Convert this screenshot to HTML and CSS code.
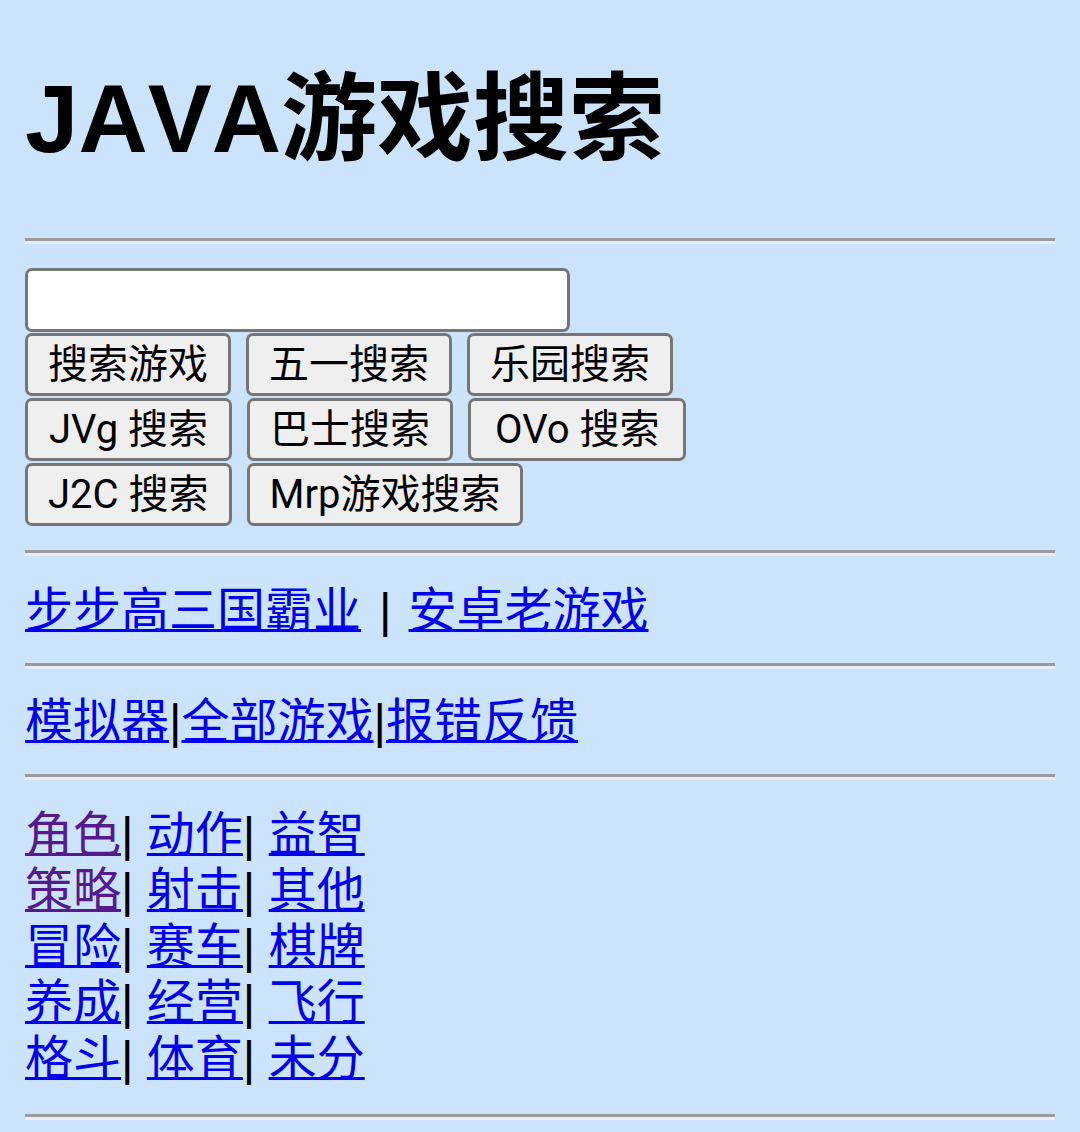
FILE: index.html
```html
<!DOCTYPE html>
<html lang="zh-CN">
<head>
<meta charset="utf-8">
<title>JAVA游戏搜索</title>
<link rel="stylesheet" href="styles.css">
</head>
<body>
<h1 class="title">JAVA游戏搜索</h1>
<hr class="rule">
<form class="search">
  <input class="search-input" type="text">
  <div class="btn-row">
    <button class="btn" type="button">搜索游戏</button>
    <button class="btn" type="button">五一搜索</button>
    <button class="btn" type="button">乐园搜索</button>
  </div>
  <div class="btn-row">
    <button class="btn btn-mid" type="button">JVg 搜索</button>
    <button class="btn" type="button">巴士搜索</button>
    <button class="btn btn-wide" type="button">OVo 搜索</button>
  </div>
  <div class="btn-row">
    <button class="btn" type="button">J2C 搜索</button>
    <button class="btn" type="button">Mrp游戏搜索</button>
  </div>
</form>
<hr class="rule">
<div class="links links-first"><a href="#" class="link">步步高三国霸业</a><span class="wide-sep">|</span><a href="#" class="link">安卓老游戏</a></div>
<hr class="rule">
<div class="links"><a href="#" class="link">模拟器</a>|<a href="#" class="link">全部游戏</a>|<a href="#" class="link">报错反馈</a></div>
<hr class="rule">
<div class="cats">
  <div class="cat-row"><a href="#" class="link visited">角色</a>| <a href="#" class="link">动作</a>| <a href="#" class="link">益智</a></div>
  <div class="cat-row"><a href="#" class="link visited">策略</a>| <a href="#" class="link">射击</a>| <a href="#" class="link">其他</a></div>
  <div class="cat-row"><a href="#" class="link">冒险</a>| <a href="#" class="link">赛车</a>| <a href="#" class="link">棋牌</a></div>
  <div class="cat-row"><a href="#" class="link">养成</a>| <a href="#" class="link">经营</a>| <a href="#" class="link">飞行</a></div>
  <div class="cat-row"><a href="#" class="link">格斗</a>| <a href="#" class="link">体育</a>| <a href="#" class="link">未分</a></div>
</div>
<hr class="rule">
</body>
</html>
```

FILE: styles.css
```css
html {
  background: #cce3fc;
}
body {
  margin: 0 25px;
  background: #cce3fc;
  font-family: "Liberation Sans", "Noto Sans CJK SC", sans-serif;
  font-size: 48px;
  color: #000;
}
.title {
  margin: 64px 0;
  font-family: "Liberation Sans", "Noto Sans CJK SC", sans-serif;
  font-weight: bold;
  font-size: 96px;
  line-height: 110px;
  font-kerning: none;
}
.rule {
  margin: 24px 0;
  height: 0;
  border: none;
  border-top: 3px solid #9a9a9a;
  border-bottom: 3px solid #e9eef6;
}
.search {
  margin: 0;
}
.search-input {
  display: block;
  box-sizing: border-box;
  width: 545px;
  height: 64px;
  margin: 0 0 1px 0;
  padding: 0 6px;
  border: 3px solid #767676;
  border-radius: 7px;
  background: #fff;
  font-size: 40px;
}
.btn-row {
  display: flex;
  gap: 15px;
  margin-bottom: 2px;
}
.btn {
  box-sizing: border-box;
  height: 63px;
  margin: 0;
  padding: 0 20px;
  border: 3px solid #767676;
  border-radius: 7px;
  background: #efefef;
  color: #000;
  font-family: Roboto, "Noto Sans CJK SC", sans-serif;
  font-size: 40px;
  line-height: 1;
}
.btn-mid {
  padding: 0 21px;
}
.btn-wide {
  padding: 0 24px;
}
.links {
  height: 57px;
  line-height: 57px;
}
.links-first {
  padding-top: 2px;
}
.wide-sep {
  display: inline-block;
  margin: 0 17px 0 18px;
}
.link {
  color: #0000ee;
  text-decoration: underline;
  text-decoration-thickness: 3px;
}
.link.visited {
  color: #551a8b;
}
.cats {
  padding: 3px 0;
  line-height: 56px;
}
.cat-row {
  height: 56px;
}
```
